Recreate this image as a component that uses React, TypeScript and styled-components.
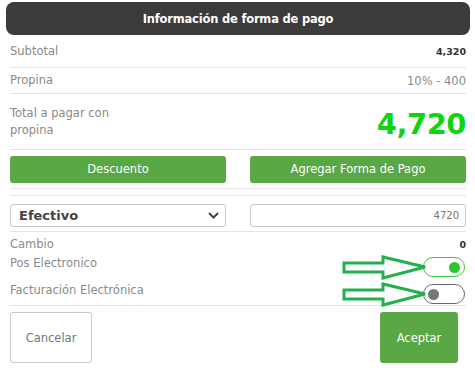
import React from "react";
import styled, { createGlobalStyle } from "styled-components";

const Global = createGlobalStyle`
  html, body { margin: 0; padding: 0; background: #fff; }
  body { font-family: "DejaVu Sans", "Open Sans", sans-serif; }
`;

const Panel = styled.div`
  position: relative;
  width: 475px;
  height: 376px;
  padding: 2px 5px 0 6px;
  box-sizing: border-box;
`;

const Header = styled.div`
  height: 33px;
  background: #3b3b3b;
  border-radius: 8px;
  display: flex;
  align-items: center;
  justify-content: center;
  color: #fff;
  font-size: 11.5px;
  font-weight: 700;
  letter-spacing: -0.2px;
`;

const Body = styled.div`
  padding: 0 4px;
`;

const Row = styled.div<{ h: number; line?: boolean; align?: string }>`
  height: ${(p) => p.h}px;
  display: flex;
  align-items: ${(p) => p.align || "center"};
  justify-content: space-between;
  border-bottom: ${(p) => (p.line ? "1px solid #e4e4e4" : "none")};
  box-sizing: border-box;
`;

const Label = styled.span<{ tight?: boolean }>`
  color: #8a8a8a;
  font-size: 11.5px;
  line-height: ${(p) => (p.tight ? "12px" : "17px")};
`;

const Value = styled.span<{ bold?: boolean }>`
  color: ${(p) => (p.bold ? "#333" : "#8a8a8a")};
  font-size: ${(p) => (p.bold ? "9.5px" : "11.5px")};
  font-weight: ${(p) => (p.bold ? 800 : 400)};
`;

const Big = styled.span`
  color: #11d411;
  font-size: 29px;
  font-weight: 900;
  letter-spacing: -0.5px;
  margin-top: 4px;
`;

const Pair = styled.div`
  display: grid;
  grid-template-columns: 216px 216px;
  justify-content: space-between;
  width: 100%;
`;

const SelectPair = styled(Pair)`
  padding-bottom: 4px;
`;

const GreenButton = styled.button`
  height: 27px;
  border: none;
  border-radius: 3px;
  background: #5aa746;
  color: #fff;
  font-family: inherit;
  font-size: 11.5px;
  padding: 0;
`;

const Select = styled.div`
  height: 23px;
  border: 1px solid #c8c8c8;
  border-radius: 3px;
  box-sizing: border-box;
  display: flex;
  align-items: center;
  justify-content: space-between;
  padding: 0 6px 0 8px;
  color: #444;
  font-size: 13px;
  font-weight: 800;
`;

const Input = styled.div`
  height: 23px;
  border: 1px solid #c8c8c8;
  border-radius: 3px;
  box-sizing: border-box;
  display: flex;
  align-items: center;
  justify-content: flex-end;
  padding: 0 6px;
  color: #777;
  font-size: 10px;
`;

const Toggle = styled.div<{ on?: boolean }>`
  width: 42px;
  height: 20px;
  border-radius: 10px;
  border: 1.5px solid ${(p) => (p.on ? "#3cc43c" : "#6a6a6a")};
  box-sizing: border-box;
  display: flex;
  align-items: center;
  justify-content: ${(p) => (p.on ? "flex-end" : "flex-start")};
  padding: 0 4px;
  margin-right: 1px;
  &::after {
    content: "";
    width: 11px;
    height: 11px;
    border-radius: 50%;
    background: ${(p) => (p.on ? "#2fc42f" : "#777")};
  }
`;

const Footer = styled.div`
  display: flex;
  justify-content: space-between;
  padding: 6px 8px 0 0;
`;

const Cancel = styled.button`
  width: 82px;
  height: 51px;
  background: #fff;
  border: 1px solid #c8c8c8;
  border-radius: 3px;
  color: #777;
  font-family: inherit;
  font-size: 11.5px;
  padding: 0;
`;

const Accept = styled(GreenButton)`
  width: 78px;
  height: 51px;
`;

const Arrow = styled.svg<{ top: number }>`
  position: absolute;
  left: 341px;
  top: ${(p) => p.top}px;
`;

function ArrowMark({ top }: { top: number }) {
  return (
    <Arrow top={top} width="88" height="26" viewBox="0 0 88 26">
      <path
        d="M3 8 L42 8 L42 2 L84 12 L42 23 L42 17 L3 17 Z"
        fill="none"
        stroke="#22b14c"
        strokeWidth="3"
        strokeLinejoin="miter"
      />
    </Arrow>
  );
}

export default function App() {
  return (
    <>
      <Global />
      <Panel>
        <Header>Información de forma de pago</Header>
        <Body>
          <Row h={33} line>
            <Label>Subtotal</Label>
            <Value bold>4,320</Value>
          </Row>
          <Row h={26} line>
            <Label>Propina</Label>
            <Value>10% - 400</Value>
          </Row>
          <Row h={56} line>
            <Label>
              Total a pagar con
              <br />
              propina
            </Label>
            <Big>4,720</Big>
          </Row>
          <Row h={39} line>
            <Pair>
              <GreenButton>Descuento</GreenButton>
              <GreenButton>Agregar Forma de Pago</GreenButton>
            </Pair>
          </Row>
          <Row h={7} line />
          <Row h={36} line align="flex-end">
            <SelectPair>
              <Select>
                Efectivo
                <svg width="11" height="7" viewBox="0 0 11 7">
                  <path d="M1 1 L5.5 5.5 L10 1" fill="none" stroke="#444" strokeWidth="2" />
                </svg>
              </Select>
              <Input>4720</Input>
            </SelectPair>
          </Row>
          <Row h={25}>
            <Label>Cambio</Label>
            <Value bold>0</Value>
          </Row>
          <Row h={27} align="flex-start">
            <Label tight>Pos Electronico</Label>
            <Toggle on />
          </Row>
          <Row h={22} line align="flex-start">
            <Label tight>Facturación Electrónica</Label>
            <Toggle />
          </Row>
          <Footer>
            <Cancel>Cancelar</Cancel>
            <Accept>Aceptar</Accept>
          </Footer>
        </Body>
        <ArrowMark top={255} />
        <ArrowMark top={282} />
      </Panel>
    </>
  );
}
